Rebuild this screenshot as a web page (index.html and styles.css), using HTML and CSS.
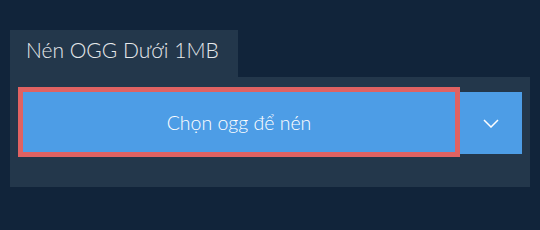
FILE: index.html
```html
<!DOCTYPE html>
<html lang="vi">
<head>
    <meta charset="UTF-8">
    <meta name="viewport" content="width=device-width, initial-scale=1.0">
    <title>Nén OGG Dưới 1MB</title>
    <link rel="stylesheet" href="styles.css">
</head>
<body>
    <div class="tool">
        <!-- Tab header -->
        <div class="tab">Nén OGG Dưới 1MB</div>

        <div class="panel">
            <div class="upload-group">
                <button class="upload-btn">Chọn ogg để nén</button>
                <button class="dropdown-btn" aria-label="Thêm tùy chọn">
                    <svg width="16" height="9" viewBox="0 0 16 9">
                        <path d="M1 1 L8 8 L15 1" fill="none" stroke="#fff" stroke-width="1.5"/>
                    </svg>
                </button>
            </div>
        </div>
    </div>
</body>
</html>
```

FILE: styles.css
```css
/* General Styling */
body {
    font-family: Lato, "Open Sans", sans-serif;
    margin: 0;
    padding: 0;
    background-color: #11243a;
}

.tool {
    padding: 30px 10px 0;
}

.tab {
    display: inline-block;
    height: 47px;
    line-height: 40px;
    padding: 0 19px 0 16px;
    box-sizing: border-box;
    background-color: #23374b;
    color: #e6e9ec;
    font-size: 21px;
    font-weight: 300;
    vertical-align: top;
}

.panel {
    background-color: #23374b;
    height: 110px;
    padding: 15px 8px 0;
    box-sizing: border-box;
}

/* Upload buttons */
.upload-group {
    display: flex;
    align-items: flex-start;
    gap: 5px;
}

.upload-btn {
    margin-left: 5px;
    width: 432px;
    height: 60px;
    border: none;
    outline: 5px solid #e06262;
    background-color: #4d9de6;
    color: #fff;
    font-family: inherit;
    font-size: 19.5px;
    font-weight: 300;
    cursor: pointer;
}

.dropdown-btn {
    width: 62px;
    height: 62px;
    border: none;
    background-color: #4d9de6;
    display: flex;
    align-items: center;
    justify-content: center;
    padding: 0;
    cursor: pointer;
}
```
